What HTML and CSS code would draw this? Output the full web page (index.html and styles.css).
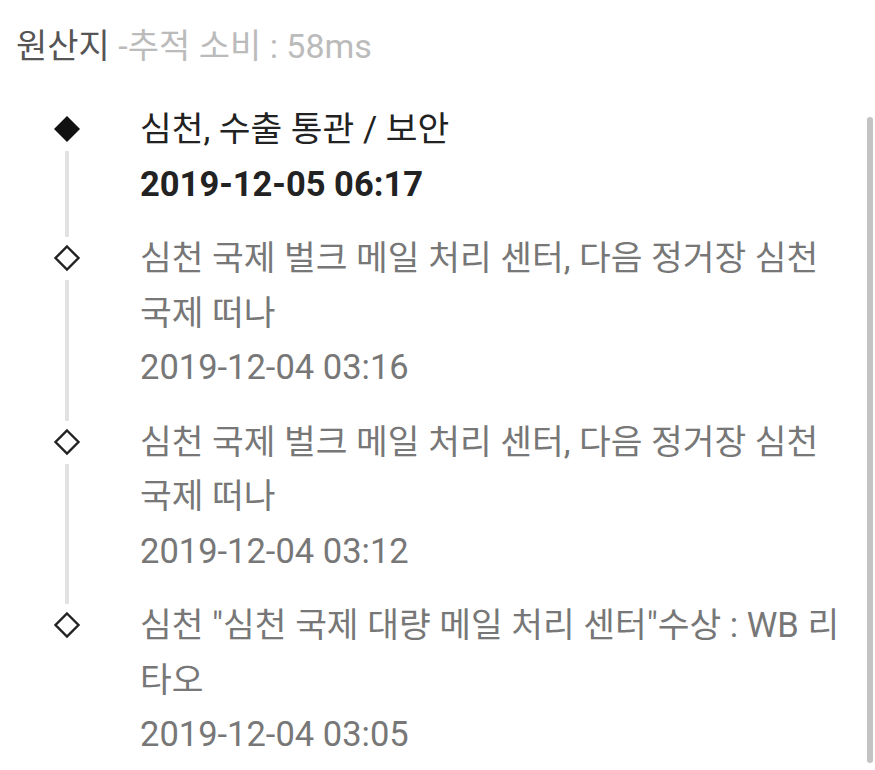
FILE: index.html
```html
<!DOCTYPE html>
<html>
<head>
  <title>원산지</title>
  <link rel="stylesheet" href="styles.css">
</head>
<body>
  <div class="page">
    <h1 class="header">원산지 <span class="cost">-추적 소비 : 58ms</span></h1>

    <div class="track">
      <div class="item current">
        <div class="rail">
          <svg class="dot" width="28" height="28" viewBox="0 0 28 28"><path d="M14 1 L27 14 L14 27 L1 14 Z" fill="#111"/></svg>
          <div class="line"></div>
        </div>
        <div class="info">
          <div class="desc">심천, 수출 통관 / 보안</div>
          <div class="time">2019-12-05 06:17</div>
        </div>
      </div>

      <div class="item">
        <div class="rail">
          <svg class="dot" width="28" height="28" viewBox="0 0 28 28"><path d="M14 2.5 L25.5 14 L14 25.5 L2.5 14 Z" fill="none" stroke="#222" stroke-width="2.4"/></svg>
          <div class="line"></div>
        </div>
        <div class="info">
          <div class="desc">심천 국제 벌크 메일 처리 센터, 다음 정거장 심천 국제 떠나</div>
          <div class="time">2019-12-04 03:16</div>
        </div>
      </div>

      <div class="item">
        <div class="rail">
          <svg class="dot" width="28" height="28" viewBox="0 0 28 28"><path d="M14 2.5 L25.5 14 L14 25.5 L2.5 14 Z" fill="none" stroke="#222" stroke-width="2.4"/></svg>
          <div class="line"></div>
        </div>
        <div class="info">
          <div class="desc">심천 국제 벌크 메일 처리 센터, 다음 정거장 심천 국제 떠나</div>
          <div class="time">2019-12-04 03:12</div>
        </div>
      </div>

      <div class="item last">
        <div class="rail">
          <svg class="dot" width="28" height="28" viewBox="0 0 28 28"><path d="M14 2.5 L25.5 14 L14 25.5 L2.5 14 Z" fill="none" stroke="#222" stroke-width="2.4"/></svg>
        </div>
        <div class="info">
          <div class="desc">심천 "심천 국제 대량 메일 처리 센터"수상 : WB 리타오</div>
          <div class="time">2019-12-04 03:05</div>
        </div>
      </div>
    </div>

    <div class="scrollbar"></div>
  </div>
</body>
</html>
```

FILE: styles.css
```css
body {
  margin: 0;
  background: #fff;
  font-family: Roboto, "Noto Sans CJK KR", sans-serif;
}

.page {
  position: relative;
  width: 875px;
  height: 770px;
  overflow: hidden;
}

.header {
  margin: 0;
  padding: 27px 0 0 16px;
  height: 72px;
  box-sizing: border-box;
  font-size: 34px;
  font-weight: normal;
  line-height: 38px;
  color: #555;
}

.cost {
  color: #bbb;
}

.track {
  padding: 30px 28px 0 16px;
}

.item {
  display: grid;
  grid-template-columns: 102px 1fr;
  column-gap: 22px;
}

.rail {
  display: flex;
  flex-direction: column;
  align-items: center;
}

.dot {
  display: block;
  margin-top: 13px;
  flex: none;
}

.line {
  flex: 1;
  width: 4px;
  margin-top: 8px;
  margin-bottom: -6px;
  background: #e2e2e2;
}

.info {
  padding-bottom: 20px;
  font-size: 34.5px;
  line-height: 54.5px;
  color: #777;
}

.current .info {
  color: #222;
}

.current .time {
  font-weight: bold;
}

.scrollbar {
  position: absolute;
  right: 2px;
  top: 117px;
  width: 6px;
  height: 646px;
  border-radius: 3px;
  background: #c3c3c3;
}
```
